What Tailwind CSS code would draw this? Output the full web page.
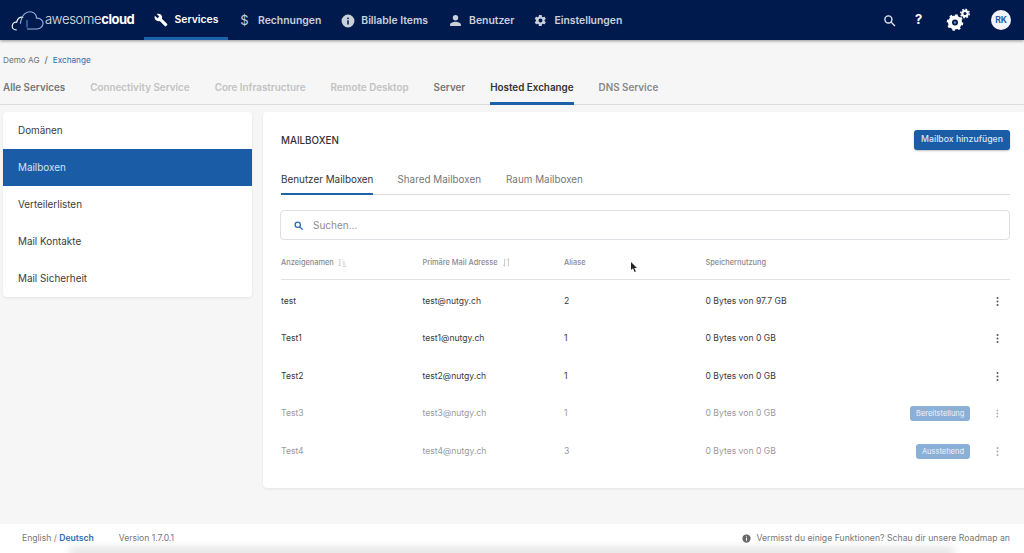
<!DOCTYPE html>
<html lang="en">
<head>
  <meta charset="UTF-8" />
  <meta name="viewport" content="width=device-width, initial-scale=1.0"/>
  <title>Mailboxen - awesomecloud</title>
  <script src="https://cdn.jsdelivr.net/npm/@tailwindcss/browser@4"></script>
</head>
<body class="relative w-[1024px] h-[553px] overflow-hidden bg-[#f6f6f6] font-['Inter',sans-serif] text-[#333]">

  <!-- top bar -->
  <header class="h-[40px] bg-[#001a4d] flex items-stretch text-[#c9d0dc] text-[10.400px] font-semibold shadow-[0_1px_3px_rgba(0,0,0,0.4)]">
    <div class="w-[144px] pl-[11px] flex items-center shrink-0">
      <svg width="33" height="24" viewBox="0 0 35 24" fill="none" stroke="#fff" stroke-width="1.200" class="shrink-0">
        <path d="M6 22.500C2 22.500 1 20 1.300 18c.4-2.400 2.500-4 4.700-3.700C6.700 10 10.500 7.800 13 9.500" />
        <path d="M10 16C11 7 16 2 22 3.500c3.500 1 5 3.700 5 6.500 4-.3 7 2.500 7 5.500 0 3.500-3 6-6.500 6H17" stroke="#8fb4dc"/>
        <path d="M17 12v8" stroke="#4d86c6"/>
      </svg>
      <span class="ml-[1px] text-[#e6e9ef] text-[13px] font-light tracking-[-0.3px]">awesome<span class="font-bold text-white tracking-[-0.5px]">cloud</span></span>
    </div>
    <nav class="flex items-stretch">
      <a class="w-[84px] flex items-center justify-center gap-[7px] text-white border-b-[3px] border-[#1c62ab] pt-[3px]">
        <svg width="14" height="14" viewBox="0 0 24 24" fill="#fff"><path d="M22.700 19l-9.100-9.100c.9-2.300.4-5-1.500-6.900-2-2-5-2.400-7.400-1.300L9 6 6 9 1.600 4.700C.4 7.100.9 10.100 2.900 12.100c1.900 1.900 4.600 2.400 6.900 1.500l9.100 9.100c.4.4 1 .4 1.400 0l2.300-2.300c.5-.4.5-1.100.1-1.400z"/></svg>
        Services
      </a>
      <a class="ml-[12px] pt-[1px] flex items-center gap-[9px]"><span class="text-[13px] font-normal w-[9px] text-center">$</span>Rechnungen</a>
      <a class="ml-[20px] pt-[1px] flex items-center gap-[6px]">
        <svg width="14" height="14" viewBox="0 0 24 24" fill="#c9d0dc"><path d="M12 1a11 11 0 100 22 11 11 0 000-22zm1.300 17h-2.600v-7.500h2.600V18zM12 9a1.600 1.600 0 110-3.200A1.600 1.600 0 0112 9z"/></svg>
        Billable Items
      </a>
      <a class="ml-[21px] pt-[1px] flex items-center gap-[7px]">
        <svg width="13" height="13" viewBox="0 0 24 24" fill="#c9d0dc"><path d="M12 12a5 5 0 100-10 5 5 0 000 10zm0 2.500c-4 0-10 2-10 5V22h20v-2.500c0-3-6-5-10-5z"/></svg>
        Benutzer
      </a>
      <a class="ml-[20px] pt-[1px] flex items-center gap-[7px]">
        <svg width="13" height="13" viewBox="0 0 24 24" fill="#c9d0dc"><path d="M19.400 13c.1-.3.1-.7.1-1s0-.7-.1-1l2.200-1.700c.2-.2.2-.4.1-.6l-2.100-3.600c-.1-.2-.4-.3-.6-.2l-2.600 1c-.5-.4-1.100-.8-1.800-1l-.4-2.700c0-.2-.2-.4-.5-.4h-4.200c-.3 0-.5.2-.5.400l-.4 2.700c-.6.300-1.200.6-1.800 1l-2.600-1c-.2-.1-.5 0-.6.200L1.500 8.700c-.1.200-.1.400.1.600L3.800 11c-.1.300-.1.700-.1 1s0 .7.1 1l-2.200 1.700c-.2.200-.2.400-.1.600l2.100 3.600c.1.200.4.300.6.200l2.600-1c.5.400 1.100.8 1.800 1l.4 2.700c0 .2.2.4.500.4h4.200c.3 0 .5-.2.5-.4l.4-2.700c.6-.3 1.200-.6 1.800-1l2.600 1c.2.100.5 0 .6-.2l2.100-3.600c.1-.2.1-.4-.1-.6L19.400 13zM12 15.600a3.600 3.600 0 110-7.200 3.600 3.600 0 010 7.200z"/></svg>
        Einstellungen
      </a>
    </nav>
    <div class="ml-auto flex items-center pr-[13px]">
      <svg width="13" height="13" viewBox="0 0 24 24" fill="none" stroke="#e6e9ef" stroke-width="2.600"><circle cx="10" cy="10" r="6.500"/><path d="M15 15l7 7"/></svg>
      <span class="ml-[19px] text-white text-[13px] font-bold w-[8px]">?</span>
      <svg width="26" height="26" viewBox="0 0 26 26" class="ml-[22px]">
        <g fill="none" stroke="#fff">
          <circle cx="10" cy="15.500" r="5" stroke-width="4"/>
          <circle cx="10" cy="15.500" r="7.300" stroke-width="2" stroke-dasharray="2.600 3.130"/>
          <circle cx="20" cy="6.500" r="2.700" stroke-width="2.200"/>
          <circle cx="20" cy="6.500" r="4.300" stroke-width="1.400" stroke-dasharray="1.700 1.670"/>
        </g>
        <circle cx="10" cy="15.500" r="1.200" fill="#4d86c6"/>
      </svg>
      <span class="ml-[20px] w-[20px] h-[20px] rounded-full bg-[#f2f4f7] text-[#1c62ab] text-[8.500px] font-bold flex items-center justify-center">RK</span>
    </div>
  </header>

  <!-- breadcrumb -->
  <div class="h-[38px] pl-[3px] pt-[14px] flex items-start text-[8.200px] leading-[12px]">
    <span class="text-[#6f6f6f]">Demo AG</span>
    <span class="mx-[5px] text-[#555] text-[9px]">/</span>
    <span class="text-[#2a6db0]">Exchange</span>
  </div>

  <!-- service tabs -->
  <div class="h-[27px] border-b border-[#dcdcdc] flex items-start gap-[25px] pl-[3px] text-[9.850px] font-semibold leading-[18px]">
    <a class="text-[#777]">Alle Services</a>
    <a class="text-[#c2c2c2]">Connectivity Service</a>
    <a class="text-[#c2c2c2]">Core Infrastructure</a>
    <a class="text-[#c2c2c2]">Remote Desktop</a>
    <a class="text-[#777]">Server</a>
    <a class="h-[27px] text-[#333] border-b-[3px] border-[#1c62ab]">Hosted Exchange</a>
    <a class="text-[#888]">DNS Service</a>
  </div>

  <div class="flex items-start pt-[7px] pl-[3px]">
    <!-- side menu -->
    <aside class="w-[249px] shrink-0 bg-white rounded-[4px] shadow-[0_1px_3px_rgba(0,0,0,0.08)] text-[9.900px] text-[#3c3c3c]">
      <a class="h-[37px] pl-[15px] flex items-center">Domänen</a>
      <a class="h-[37px] pl-[15px] flex items-center bg-[#1a5da6] text-[#d5e2f0]">Mailboxen</a>
      <a class="h-[37px] pl-[15px] flex items-center">Verteilerlisten</a>
      <a class="h-[37px] pl-[15px] flex items-center">Mail Kontakte</a>
      <a class="h-[37px] pl-[15px] flex items-center">Mail Sicherheit</a>
    </aside>

    <!-- main card -->
    <main class="ml-[11px] w-[761px] h-[376px] bg-white rounded-l-[4px] shadow-[0_1px_3px_rgba(0,0,0,0.08)] pl-[18px] pr-[14px]">
      <div class="h-[54px] flex items-center justify-between pt-[2px]">
        <h2 class="mt-[2px] text-[9.800px] font-medium text-[#333]">MAILBOXEN</h2>
        <button class="w-[96px] h-[20px] rounded-[3px] bg-[#1a5da6] text-[#dbe6f2] text-[8.700px] font-medium shadow-[0_1px_2px_rgba(0,0,0,0.25)]">Mailbox hinzufügen</button>
      </div>
      <div class="h-[29px] border-b border-[#dcdcdc] flex items-start text-[9.900px] leading-[26px] text-[#777]">
        <a class="h-[29px] text-[#333] border-b-[2px] border-[#1c62ab]">Benutzer Mailboxen</a>
        <a class="ml-[24px]">Shared Mailboxen</a>
        <a class="ml-[25px]">Raum Mailboxen</a>
      </div>
      <div class="mt-[15px] -ml-[1px] h-[30px] border border-[#dcdfe3] rounded-[4px] flex items-center pl-[13px] text-[10px] text-[#8e8e8e]">
        <svg width="9" height="9" viewBox="0 0 24 24" fill="none" stroke="#2a6db0" stroke-width="3.500"><circle cx="10" cy="10" r="7"/><path d="M15 15l8 8"/></svg>
        <span class="ml-[10px]">Suchen...</span>
      </div>

      <table class="w-full mt-[5px] table-fixed border-collapse text-[8.600px]">
        <thead>
          <tr class="h-[34.500px] border-b border-[#e2e2e2] text-left text-[7.400px] text-[#8a8a8a] [&>th]:pt-[1px]">
            <th class="w-[141.500px] font-medium">
              <span class="inline-flex items-center gap-[4px]">Anzeigenamen
                <svg width="9" height="9" viewBox="0 0 12 12" fill="none" stroke="#b5b5b5"><path d="M2.500 1v10M1 9.500l1.500 1.500M6 2h1M6 5h3M6 8h4M6 11h5"/></svg>
              </span>
            </th>
            <th class="w-[141.500px] font-medium">
              <span class="inline-flex items-center gap-[4px]">Primäre Mail Adresse
                <svg width="9" height="9" viewBox="0 0 12 12" fill="none" stroke="#b5b5b5"><path d="M3.500 1v10M1.500 9l2 2M8.500 11V1M6.500 3l2-2"/></svg>
              </span>
            </th>
            <th class="w-[141.500px] font-medium">Aliase</th>
            <th class="font-medium">Speichernutzung</th>
            <th class="w-[100px]"></th>
          </tr>
        </thead>
        <tbody>
          <tr class="h-[40.500px] text-[#3a3a3a] [&>td]:pt-[3px]">
            <td>test</td><td>test@nutgy.ch</td><td>2</td><td>0 Bytes von 97.7 GB</td>
            <td><div class="flex justify-end pr-[11px]"><svg width="3" height="9" viewBox="0 0 3 9" fill="#555"><circle cx="1.500" cy="1" r="1"/><circle cx="1.500" cy="4.500" r="1"/><circle cx="1.500" cy="8" r="1"/></svg></div></td>
          </tr>
          <tr class="h-[37.500px] text-[#3a3a3a]">
            <td>Test1</td><td>test1@nutgy.ch</td><td>1</td><td>0 Bytes von 0 GB</td>
            <td><div class="flex justify-end pr-[11px]"><svg width="3" height="9" viewBox="0 0 3 9" fill="#555"><circle cx="1.500" cy="1" r="1"/><circle cx="1.500" cy="4.500" r="1"/><circle cx="1.500" cy="8" r="1"/></svg></div></td>
          </tr>
          <tr class="h-[37.500px] text-[#3a3a3a]">
            <td>Test2</td><td>test2@nutgy.ch</td><td>1</td><td>0 Bytes von 0 GB</td>
            <td><div class="flex justify-end pr-[11px]"><svg width="3" height="9" viewBox="0 0 3 9" fill="#555"><circle cx="1.500" cy="1" r="1"/><circle cx="1.500" cy="4.500" r="1"/><circle cx="1.500" cy="8" r="1"/></svg></div></td>
          </tr>
          <tr class="h-[37.500px] text-[#9a9a9a]">
            <td>Test3</td><td>test3@nutgy.ch</td><td>1</td><td>0 Bytes von 0 GB</td>
            <td><div class="flex justify-end items-center gap-[26px] pr-[11px]"><span class="h-[15px] px-[6px] rounded-[3px] bg-[#8bb0d8] text-[#eef3f9] text-[7.500px] flex items-center">Bereitstellung</span><svg width="3" height="9" viewBox="0 0 3 9" fill="#aaa"><circle cx="1.500" cy="1" r="1"/><circle cx="1.500" cy="4.500" r="1"/><circle cx="1.500" cy="8" r="1"/></svg></div></td>
          </tr>
          <tr class="h-[37.500px] text-[#9a9a9a]">
            <td>Test4</td><td>test4@nutgy.ch</td><td>3</td><td>0 Bytes von 0 GB</td>
            <td><div class="flex justify-end items-center gap-[26px] pr-[11px]"><span class="h-[15px] px-[6px] rounded-[3px] bg-[#8bb0d8] text-[#eef3f9] text-[7.500px] flex items-center">Ausstehend</span><svg width="3" height="9" viewBox="0 0 3 9" fill="#aaa"><circle cx="1.500" cy="1" r="1"/><circle cx="1.500" cy="4.500" r="1"/><circle cx="1.500" cy="8" r="1"/></svg></div></td>
          </tr>
        </tbody>
      </table>
    </main>
  </div>

  <!-- footer -->
  <footer class="absolute left-0 right-0 bottom-0 h-[29px] bg-white flex items-center pl-[22px] pr-[14px] text-[8.600px] text-[#777]">
    <span>English / <span class="font-semibold text-[#2a6db0]">Deutsch</span></span>
    <span class="ml-[25px]">Version 1.7.0.1</span>
    <span class="ml-auto flex items-center gap-[5px] text-[8.700px]">
      <svg width="9" height="9" viewBox="0 0 24 24" fill="#666"><path d="M12 1a11 11 0 100 22 11 11 0 000-22zm1.300 17h-2.600v-7.500h2.600V18zM12 9a1.600 1.600 0 110-3.200A1.600 1.600 0 0112 9z"/></svg>
      Vermisst du einige Funktionen? Schau dir unsere Roadmap an
    </span>
    <div class="absolute left-[70px] right-[70px] -bottom-[3px] h-[8px] bg-[#dedede] blur-[4px]"></div>
  </footer>

  <!-- mouse pointer captured in the screenshot -->
  <svg class="absolute left-[630px] top-[261px]" width="8" height="12" viewBox="0 0 8 12" fill="#222"><path d="M1 1v8l2-1.800L4.500 11l1.300-.6L4.300 7H7z"/></svg>
</body>
</html>
